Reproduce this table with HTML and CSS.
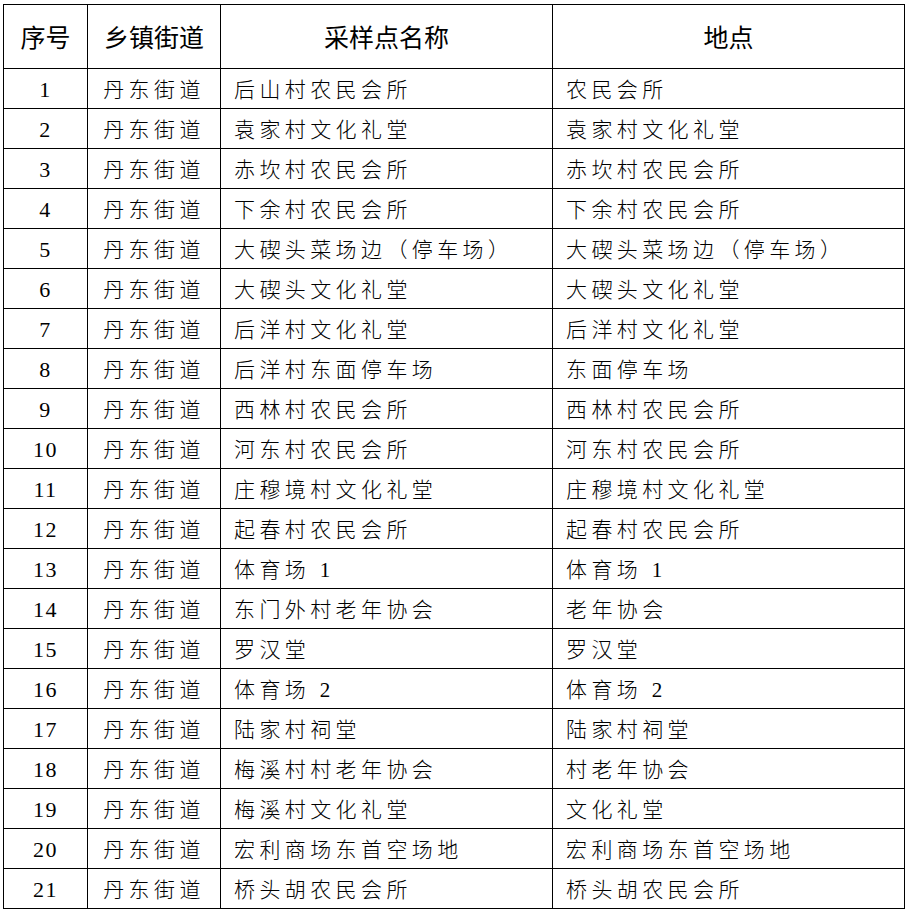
FILE: index.html
```html
<!DOCTYPE html>
<html lang="zh-CN">
<head>
<meta charset="utf-8">
<title>采样点</title>
<link rel="stylesheet" href="styles.css">
</head>
<body>
<table class="sheet">
<colgroup><col class="c1"><col class="c2"><col class="c3"><col class="c4"></colgroup>
<thead>
<tr><th>序号</th><th>乡镇街道</th><th>采样点名称</th><th>地点</th></tr>
</thead>
<tbody>
<tr><td class="num">1</td><td class="town">丹东街道</td><td>后山村农民会所</td><td>农民会所</td></tr>
<tr><td class="num">2</td><td class="town">丹东街道</td><td>袁家村文化礼堂</td><td>袁家村文化礼堂</td></tr>
<tr><td class="num">3</td><td class="town">丹东街道</td><td>赤坎村农民会所</td><td>赤坎村农民会所</td></tr>
<tr><td class="num">4</td><td class="town">丹东街道</td><td>下余村农民会所</td><td>下余村农民会所</td></tr>
<tr><td class="num">5</td><td class="town">丹东街道</td><td>大碶头菜场边（停车场）</td><td>大碶头菜场边（停车场）</td></tr>
<tr><td class="num">6</td><td class="town">丹东街道</td><td>大碶头文化礼堂</td><td>大碶头文化礼堂</td></tr>
<tr><td class="num">7</td><td class="town">丹东街道</td><td>后洋村文化礼堂</td><td>后洋村文化礼堂</td></tr>
<tr><td class="num">8</td><td class="town">丹东街道</td><td>后洋村东面停车场</td><td>东面停车场</td></tr>
<tr><td class="num">9</td><td class="town">丹东街道</td><td>西林村农民会所</td><td>西林村农民会所</td></tr>
<tr><td class="num">10</td><td class="town">丹东街道</td><td>河东村农民会所</td><td>河东村农民会所</td></tr>
<tr><td class="num">11</td><td class="town">丹东街道</td><td>庄穆境村文化礼堂</td><td>庄穆境村文化礼堂</td></tr>
<tr><td class="num">12</td><td class="town">丹东街道</td><td>起春村农民会所</td><td>起春村农民会所</td></tr>
<tr><td class="num">13</td><td class="town">丹东街道</td><td>体育场 <span class="d">1</span></td><td>体育场 <span class="d">1</span></td></tr>
<tr><td class="num">14</td><td class="town">丹东街道</td><td>东门外村老年协会</td><td>老年协会</td></tr>
<tr><td class="num">15</td><td class="town">丹东街道</td><td>罗汉堂</td><td>罗汉堂</td></tr>
<tr><td class="num">16</td><td class="town">丹东街道</td><td>体育场 <span class="d">2</span></td><td>体育场 <span class="d">2</span></td></tr>
<tr><td class="num">17</td><td class="town">丹东街道</td><td>陆家村祠堂</td><td>陆家村祠堂</td></tr>
<tr><td class="num">18</td><td class="town">丹东街道</td><td>梅溪村村老年协会</td><td>村老年协会</td></tr>
<tr><td class="num">19</td><td class="town">丹东街道</td><td>梅溪村文化礼堂</td><td>文化礼堂</td></tr>
<tr><td class="num">20</td><td class="town">丹东街道</td><td>宏利商场东首空场地</td><td>宏利商场东首空场地</td></tr>
<tr><td class="num">21</td><td class="town">丹东街道</td><td>桥头胡农民会所</td><td>桥头胡农民会所</td></tr>
</tbody>
</table>
</body>
</html>
```
FILE: styles.css
```css
html, body {
  margin: 0;
  padding: 0;
  background: #ffffff;
}
body {
  padding: 4px 0 0 3px;
}
.sheet {
  border-collapse: collapse;
  table-layout: fixed;
  width: 901px;
  color: #000;
}
.c1 { width: 84px; }
.c2 { width: 133px; }
.c3 { width: 332px; }
.c4 { width: 352px; }
.sheet th, .sheet td {
  border: 1px solid #000;
  padding: 0;
  white-space: nowrap;
  overflow: hidden;
}
.sheet th {
  height: 63px;
  font-family: "Noto Sans CJK SC", sans-serif;
  font-weight: 400;
  font-size: 25px;
  text-align: center;
  vertical-align: middle;
  line-height: 1;
}
.sheet td {
  height: 36px;
  padding-top: 3px;
  font-family: "Liberation Serif", "Noto Sans CJK SC", serif;
  font-weight: 300;
  font-size: 21px;
  letter-spacing: 4.4px;
  text-align: left;
  padding-left: 13px;
  vertical-align: middle;
  line-height: 1;
}
.sheet td.num {
  text-align: center;
  padding-left: 0;
  font-size: 22px;
  font-weight: 400;
  letter-spacing: 1.5px;
}
.sheet td.town {
  text-align: center;
  padding-left: 0;
}
.d {
  font-weight: 400;
}
```
